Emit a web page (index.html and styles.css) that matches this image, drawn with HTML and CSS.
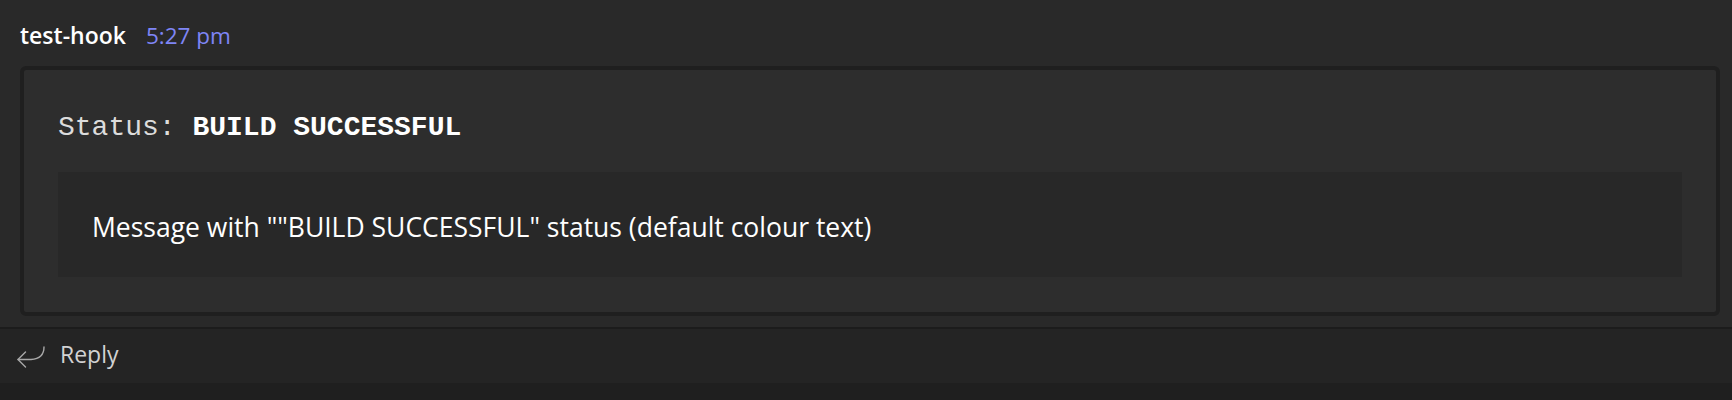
FILE: index.html
```html
<!DOCTYPE html>
<html lang="en">
<head>
<meta charset="utf-8">
<title>test-hook</title>
<link rel="stylesheet" href="styles.css">
</head>
<body>
<div class="thread">
  <div class="message">
    <div class="msg-header">
      <span class="author">test-hook</span>
      <span class="time">5:27 pm</span>
    </div>
    <div class="card">
      <div class="status">Status: <b>BUILD SUCCESSFUL</b></div>
      <div class="container">
        <p class="text">Message with ""BUILD SUCCESSFUL" status (default colour text)</p>
      </div>
    </div>
  </div>
  <div class="reply-bar">
    <svg class="reply-icon" width="30" height="24" viewBox="0 0 30 24" fill="none" stroke="currentColor" stroke-width="1.4" stroke-linecap="round" stroke-linejoin="round">
      <path d="M28 1 C28 9 23 13 15 13.5 H2"/>
      <path d="M9.5 6 L2 13.5 L9.5 21"/>
    </svg>
    <span class="reply-label">Reply</span>
  </div>
</div>
<div class="footer"></div>
</body>
</html>
```

FILE: styles.css
```css
html, body {
  margin: 0;
  padding: 0;
}

body {
  background: #1f1f1f;
  font-family: "Open Sans", "Noto Sans", sans-serif;
  color: #ffffff;
}

.thread {
  background: #292929;
}

.message {
  padding: 20px 12px 0 20px;
}

.msg-header {
  display: flex;
  align-items: baseline;
  height: 30px;
  line-height: 30px;
  font-size: 23px;
  margin-bottom: 16px;
}

.author {
  font-weight: 600;
  color: #ffffff;
}

.time {
  margin-left: 20px;
  color: #7f85f5;
  font-size: 22.5px;
}

.card {
  background: #2d2d2d;
  border: 4px solid #1f1f1f;
  border-radius: 6px;
  padding: 40px 34px 35px 34px;
}

.status {
  font-family: "Liberation Mono", "Courier New", monospace;
  font-size: 28px;
  line-height: 36px;
  color: #dcdcdc;
  margin-bottom: 26px;
}

.status b {
  color: #ffffff;
  font-weight: 700;
}

.container {
  background: #282828;
  padding: 35.5px 32px 31.5px 34px;
}

.text {
  margin: 0;
  font-size: 26.5px;
  line-height: 38px;
  color: #ffffff;
}

.reply-bar {
  margin-top: 11px;
  border-top: 2px solid #1c1c1c;
  background: #242424;
  height: 44px;
  padding: 10px 0 0 16px;
  display: flex;
  align-items: flex-start;
}

.reply-icon {
  color: #a8a8a8;
  margin-top: 7px;
}

.reply-label {
  margin-left: 14px;
  font-size: 23px;
  line-height: 31px;
  color: #d2d2d2;
}

.footer {
  height: 17px;
  background: #1f1f1f;
}
```
